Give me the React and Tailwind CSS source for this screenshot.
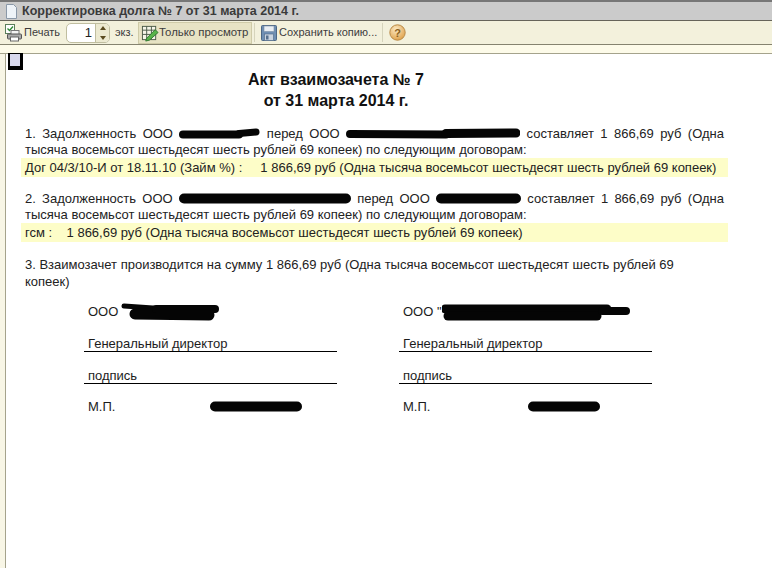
import React from 'react'

// redaction marks: each stroke is [x1, y1, x2, y2, thickness]
const Blot = ({ w, h, strokes, className = '' }) => (
    <svg width={w} height={h} viewBox={`0 0 ${w} ${h}`} className={`inline-block ${className}`}>
        {strokes.map((s, i) => (
            <line key={i} x1={s[0]} y1={s[1]} x2={s[2]} y2={s[3]} stroke="#050505" strokeWidth={s[4]} strokeLinecap="round" />
        ))}
    </svg>
)

const PrintIcon = () => (
    <svg width="18" height="18" viewBox="0 0 18 18" className="shrink-0">
        <rect x="0.5" y="0.5" width="9" height="9" fill="#fff" stroke="#5b7f5b" />
        <path d="M2.5 4.5l2 2 3.5-4" fill="none" stroke="#2f8a35" strokeWidth="1.4" />
        <rect x="6" y="6.5" width="8" height="4" fill="#f4f4f4" stroke="#777" />
        <rect x="2.5" y="10" width="14" height="5" rx="1" fill="#a9a9a9" stroke="#555" />
        <rect x="5.5" y="13" width="8" height="4" fill="#fff" stroke="#666" />
    </svg>
)

const SpinArrows = () => (
    <svg width="8" height="16" viewBox="0 0 8 16">
        <path d="M4 1l3 4H1z" fill="#5a4a20" />
        <path d="M4 15l3-4H1z" fill="#5a4a20" />
    </svg>
)

const TableEditIcon = () => (
    <svg width="18" height="18" viewBox="0 0 19 19" className="shrink-0">
        <rect x="1.5" y="2.5" width="14" height="14" fill="#f5f5e8" stroke="#4a5a48" />
        <path d="M1.5 6.5h14M1.5 11h14M6 2.5v14M11 2.5v14" stroke="#4a5a48" />
        <path d="M6 15l9-9 3 3-9 8-4 1z" fill="#58b34a" stroke="#2f7a30" />
    </svg>
)

const SaveIcon = () => (
    <svg width="16" height="16" viewBox="0 0 16 16" className="shrink-0">
        <rect x="0.5" y="0.5" width="15" height="15" rx="1" fill="#6f8fb3" stroke="#4d6785" />
        <rect x="3" y="1" width="10" height="5.5" fill="#e9eef4" stroke="#7a8ea6" strokeWidth="0.6" />
        <rect x="3.5" y="9" width="9" height="6.5" fill="#c9d3df" stroke="#56708e" strokeWidth="0.7" />
        <rect x="5" y="10.5" width="2.5" height="4" fill="#56708e" />
    </svg>
)

const HelpIcon = () => (
    <svg width="17" height="17" viewBox="0 0 17 17" className="shrink-0">
        <defs>
            <radialGradient id="helpFill" cx="0.4" cy="0.3" r="0.8">
                <stop offset="0" stopColor="#fbe9c4" />
                <stop offset="1" stopColor="#dc9a3e" />
            </radialGradient>
        </defs>
        <circle cx="8.5" cy="8.5" r="7.7" fill="url(#helpFill)" stroke="#b98a48" />
        <text x="8.5" y="12.5" textAnchor="middle" fontSize="11" fontWeight="700" fill="#8a6020" fontFamily="Liberation Sans, sans-serif">?</text>
    </svg>
)

const Sep = () => <div className="w-px h-[19px] bg-[#d6d4bc] shrink-0" />

function Toolbar() {
    return (
        <div className="h-[24px] bg-[#f3f1dc] flex items-center pl-[5px] text-[11px] text-[#3c3c3c] border-b border-[#85836f] shrink-0">
            <PrintIcon />
            <span className="ml-[1px] w-[34px]">Печать</span>
            <div className="ml-[8px] w-[44px] h-[20px] flex bg-white border border-[#c0bea0] rounded-[5px] overflow-hidden">
                <span className="flex-1 text-right pr-[3px] leading-[18px] text-[13px] text-[#222]">1</span>
                <span className="w-[14px] bg-[#ece9d0] border-l border-[#c0bea0] flex items-center justify-center">
                    <SpinArrows />
                </span>
            </div>
            <span className="ml-[5px] w-[20px]">экз.</span>
            <div className="ml-[3px] h-[22px] w-[114px] flex items-center pl-[2px] bg-[#e7e3c4] border border-[#cfcba8]">
                <TableEditIcon />
                <span className="whitespace-nowrap text-[11.4px]">Только просмотр</span>
            </div>
            <div className="ml-[2px]"><Sep /></div>
            <div className="ml-[6px]"><SaveIcon /></div>
            <span className="ml-[2px] w-[98px] whitespace-nowrap">Сохранить копию...</span>
            <div className="ml-[5px]"><Sep /></div>
            <div className="ml-[6px]"><HelpIcon /></div>
        </div>
    )
}

function Signature({ company, name }) {
    return (
        <div className="w-[253px] text-[13px] text-[#1c1c1c]">
            <div className="pl-[4px] h-[24px] flex items-center whitespace-nowrap">{company}</div>
            <div className="mt-[11px] pl-[4px] h-[16px] leading-[17px] border-b border-black box-content">Генеральный директор</div>
            <div className="mt-[15px] pl-[4px] h-[16px] leading-[17px] border-b border-black box-content">подпись</div>
            <div className="mt-[6px] pl-[4px] flex items-center h-[33px]">
                <span className="w-[30px]">М.П.</span>
                {name}
            </div>
        </div>
    )
}

export default function App() {
    return (
        <div className="w-[772px] h-[568px] bg-white overflow-hidden flex flex-col font-['Liberation_Sans',Arial,sans-serif]">
            {/* Window title */}
            <div className="h-[21px] bg-[#cbcbcb] border-t-2 border-b border-t-[#777] border-b-[#66645a] flex items-center pl-[6px] shrink-0">
                <svg width="11" height="15" viewBox="0 0 11 15" className="shrink-0">
                    <path d="M0.5 0.5h7l3 3v11h-10z" fill="#eef3f8" stroke="#8a98a8" />
                </svg>
                <span className="ml-[5px] text-[12.5px] font-bold text-[#3a3a3a] whitespace-nowrap">Корректировка долга № 7 от 31 марта 2014 г.</span>
            </div>

            <Toolbar />
            <div className="h-[8px] bg-[#fdfbe9] border-b border-[#a5a38c] box-content shrink-0" />

            <div className="flex flex-1 min-h-0">
                <div className="w-[6px] bg-[#f8f6e6] border-r border-[#a5a38c] shrink-0" />
                <div className="flex-1 pl-[15px] relative">
                    {/* selected cell marker */}
                    <div className="absolute left-[2px] top-[-1px] w-[15px] h-[17px] bg-[#d8d8ec] border-black border-l-2 border-r-[3px] border-b-4 border-t" />

                    <div className="w-[630px] pt-[15px] text-center text-[16px] leading-[21px] font-bold text-[#111]">
                        <div>Акт взаимозачета № 7</div>
                        <div>от 31 марта 2014 г.</div>
                    </div>

                    <div className="w-[707px] mt-[15px] text-[13px] leading-[16px] text-[#222]">
                        <p className="px-[4px] text-justify">
                            1. Задолженность ООО{' '}
                            <Blot w={81} h={11} className="align-[-1px]" strokes={[[4, 6.5, 60, 6.5, 8], [60, 5.5, 77, 4, 7]]} />{' '}
                            перед ООО{' '}
                            <Blot w={174} h={11} className="align-[-1px]" strokes={[[4, 6, 100, 6.5, 8], [100, 5.5, 170, 5, 9]]} />{' '}
                            составляет 1 866,69 руб (Одна тысяча восемьсот шестьдесят шесть рублей 69 копеек) по следующим договорам:
                        </p>
                        <div className="h-[19px] leading-[19px] bg-[#fdfdc8] px-[4px] whitespace-pre">Дог 04/3/10-И от 18.11.10 (Займ %) :     1 866,69 руб (Одна тысяча восемьсот шестьдесят шесть рублей 69 копеек)</div>

                        <p className="mt-[14px] px-[4px] text-justify">
                            2. Задолженность ООО{' '}
                            <Blot w={172} h={11} className="align-[-1px]" strokes={[[5, 5.5, 167, 5.5, 10]]} />{' '}
                            перед ООО{' '}
                            <Blot w={85} h={11} className="align-[-1px]" strokes={[[5, 5.5, 80, 5.5, 10]]} />{' '}
                            составляет 1 866,69 руб (Одна тысяча восемьсот шестьдесят шесть рублей 69 копеек) по следующим договорам:
                        </p>
                        <div className="h-[19px] leading-[19px] bg-[#fdfdc8] px-[4px] whitespace-pre">гсм :    1 866,69 руб (Одна тысяча восемьсот шестьдесят шесть рублей 69 копеек)</div>

                        <p className="mt-[14px] px-[4px] leading-[17px]">
                            3. Взаимозачет производится на сумму 1 866,69 руб (Одна тысяча восемьсот шестьдесят шесть рублей 69<br />копеек)
                        </p>
                    </div>

                    <div className="flex gap-[62px] mt-[10px] ml-[63px]">
                        <Signature
                            company={<>ООО <Blot w={98} h={18} className="ml-[3px]" strokes={[[3, 3, 32, 5, 5], [14, 11, 88, 12, 11], [35, 6, 94, 6, 8]]} /></>}
                            name={<Blot w={92} h={11} className="ml-[92px]" strokes={[[5, 5.5, 87, 5.5, 10]]} />}
                        />
                        <Signature
                            company={<>ООО "<Blot w={188} h={17} strokes={[[3, 5, 165, 5, 9], [6, 12, 155, 12, 9], [160, 7, 184, 7, 8]]} /></>}
                            name={<Blot w={72} h={11} className="ml-[95px]" strokes={[[5, 5.5, 67, 5.5, 10]]} />}
                        />
                    </div>
                </div>
            </div>
        </div>
    )
}
